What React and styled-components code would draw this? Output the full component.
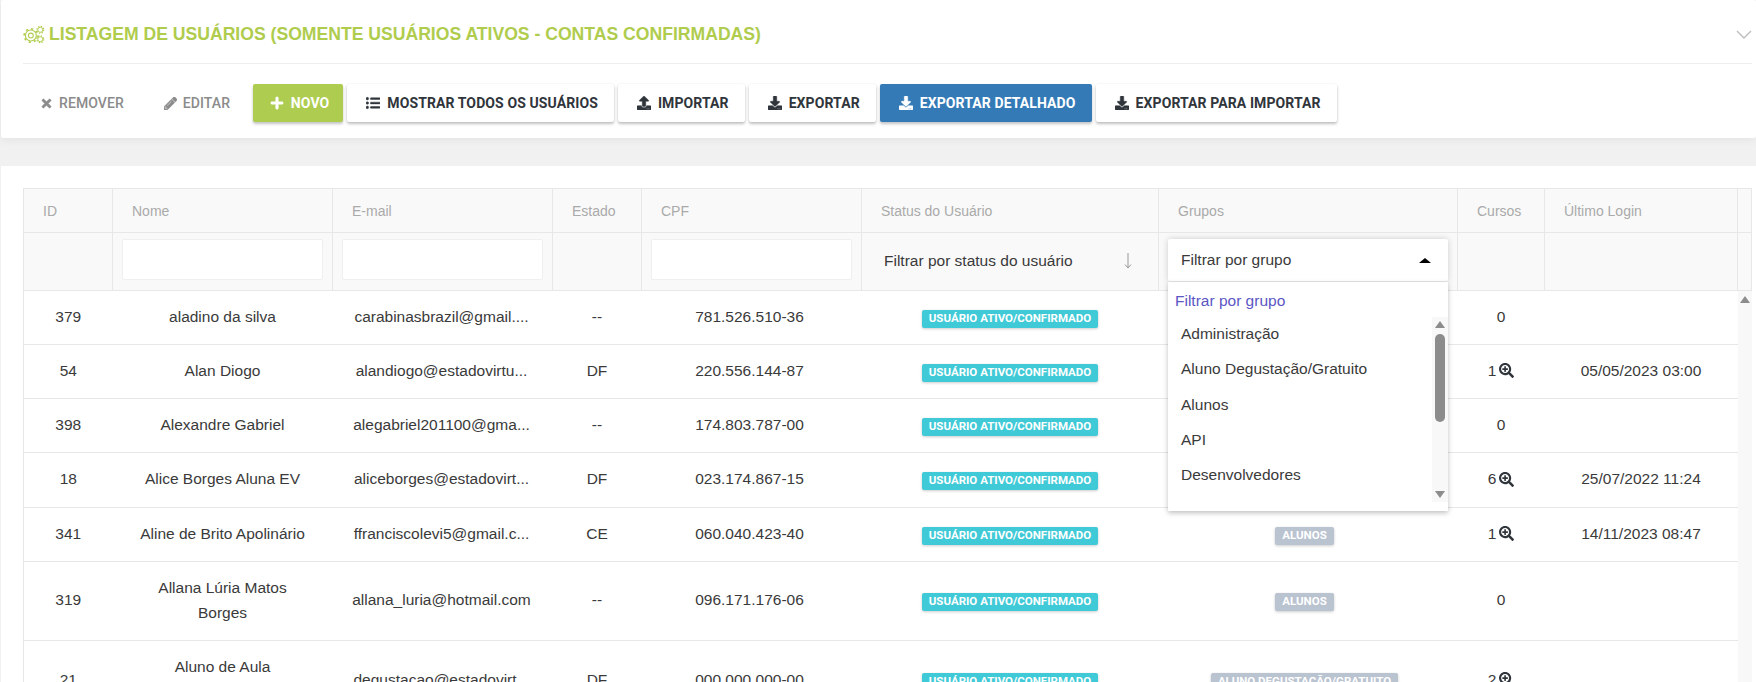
import React from "react";
import styled, { createGlobalStyle } from "styled-components";
import { FaTimes, FaPencilAlt, FaPlus, FaListUl, FaUpload, FaDownload, FaSearchPlus } from "react-icons/fa";

const GlobalStyle = createGlobalStyle`
  html, body { margin: 0; padding: 0; }
  body { font-family: "Liberation Sans", Arial, sans-serif; color: #3a3a3a; }
  * { box-sizing: border-box; }
`;

const Page = styled.div` height: 100vh; overflow: hidden; background: #f1f1f1; padding-left: 1px; `;
const Panel = styled.section` height: 138px; background: #fff; padding: 0 4px 0 22px; box-shadow: 0 2px 8px rgba(0, 0, 0, 0.06); border-radius: 2px; `;
const TitleRow = styled.div` height: 64px; display: flex; align-items: center; justify-content: space-between; border-bottom: 1px solid #eceeef; padding: 5px 0 0; `;
const Title = styled.h1` margin: 0; display: flex; align-items: center; gap: 4px; font-size: 17.6px; font-weight: 700; color: #afcc4d; `;
const Chevron = styled.svg` width: 16px; height: 9px; fill: none; stroke: #bdbdbd; stroke-width: 1.4; `;
const Toolbar = styled.div` display: flex; gap: 4px; padding-top: 20px; `;

const variants = {
  white: { bg: "#fff", fg: "#2f353b", shadow: "0 2px 3px rgba(0,0,0,.24), 0 0 2px rgba(0,0,0,.08)", pad: "0 16px 0 19px" },
  green: { bg: "#aecd50", fg: "#fff", shadow: "0 2px 3px rgba(0,0,0,.24)", pad: "0 14px 0 17px" },
  blue: { bg: "#337ab7", fg: "#fff", shadow: "0 2px 3px rgba(0,0,0,.24)", pad: "0 16px 0 19px" },
};
const Button = styled.button`
  height: 38px; display: flex; align-items: center; gap: 7px; padding: ${(p) => variants[p.$kind].pad};
  border: 0; border-radius: 2px; font: 700 14px Roboto, sans-serif; letter-spacing: 0.1px; text-transform: uppercase;
  background: ${(p) => variants[p.$kind].bg}; color: ${(p) => variants[p.$kind].fg}; box-shadow: ${(p) => variants[p.$kind].shadow};
  svg { width: 14px; height: 14px; flex: none; stroke: currentColor; stroke-width: 16px; }
`;
const FlatButton = styled.button`
  height: 38px; display: flex; align-items: center; gap: 6px; padding: 0 18.75px 0 17px;
  border: 0; background: transparent; color: #8b8b8b; font: 500 14px Roboto, sans-serif; letter-spacing: 0.1px; text-transform: uppercase;
  svg { width: 13px; height: 13px; flex: none; stroke: currentColor; stroke-width: 24px; }
`;

const ListCard = styled.section` margin-top: 28px; height: 600px; background: #fff; padding: 22px 4px 0 22px; `;
const GridHead = styled.table` width: 1729px; table-layout: fixed; border-collapse: collapse; background: #f9f9f9; border: 1px solid #e7e7e7; border-bottom: 0; `;
const HeadCell = styled.th` height: 44px; padding: 0 19px; text-align: left; font-size: 14px; font-weight: 400; color: #aaa; border: 1px solid #e7e7e7; `;
const FilterCell = styled.td` height: 58px; padding: 0 9px 4px; border: 1px solid #e7e7e7; position: relative; `;
const TextFilter = styled.input` display: block; width: 100%; height: 41px; background: #fff; border: 1px solid #efefef; border-radius: 2px; outline: 0; `;
const SelectText = styled.div` display: flex; align-items: center; justify-content: space-between; margin-top: 2px; padding: 0 16px 0 13px; font-size: 15.5px; color: #3a3a3a; `;
const ArrowDown = styled.svg` width: 10px; height: 18px; fill: none; stroke: #9a9a9a; stroke-width: 1; `;

const GroupSelect = styled.div` position: relative; margin-top: 2px; height: 43px; background: #fff; box-shadow: 0 0 6px rgba(0, 0, 0, 0.18); border-radius: 2px; border-bottom: 1px solid #e5e5e5; display: flex; align-items: center; justify-content: space-between; padding: 0 17px 0 13px; font-size: 15.5px; z-index: 2; `;
const Caret = styled.span` width: 0; height: 0; border: 5px solid transparent; border-top: 0; border-bottom: 5px solid #000; border-left-width: 6px; border-right-width: 6px; `;
const Menu = styled.div` position: absolute; top: 43px; left: 0; right: 0; height: 229px; background: #fff; box-shadow: 0 2px 5px rgba(0, 0, 0, 0.25); font-size: 15.5px; `;
const MenuHeader = styled.div` padding: 10px 7px 0; line-height: 17px; color: #5b56c4; `;
const MenuList = styled.ul` list-style: none; margin: 8px 0 0; padding: 0 13px; `;
const MenuItem = styled.li` height: 35.3px; line-height: 34px; color: #3a3a3a; `;
const MenuTrack = styled.div` position: absolute; top: 35px; bottom: 9px; right: 0; width: 16px; background: #f8f8f8; display: flex; flex-direction: column; align-items: center; justify-content: space-between; padding: 4px 0; `;
const MenuThumb = styled.div` position: absolute; top: 17px; left: 3px; width: 10px; height: 88px; border-radius: 5px; background: #8c8c8c; `;
const TrackArrow = styled.span`
  width: 0; height: 0; border-left: 5px solid transparent; border-right: 5px solid transparent;
  ${(p) => (p.$down ? "border-top: 7px solid #8c8c8c;" : "border-bottom: 7px solid #8c8c8c;")}
`;

const BodyRow = styled.div` display: flex; width: 1729px; `;
const GridBody = styled.table` width: 1713px; flex: none; table-layout: fixed; border-collapse: collapse; border-left: 1px solid #e7e7e7; `;
const Row = styled.tr` border-bottom: 1px solid #e7e7e7; `;
const Cell = styled.td` padding: 13px 20px 15px; text-align: center; font-size: 15.5px; line-height: 25.15px; color: #3a3a3a; `;
const NameCell = styled(Cell)` padding-left: 26px; padding-right: 26px; `;
const EmailCell = styled(Cell)` padding-left: 8px; padding-right: 10px; `;
const CpfCell = styled(Cell)` padding-left: 18px; padding-right: 22px; `;
const GroupCell = styled(Cell)` padding-right: 27px; padding-left: 20px; `;
const Badge = styled.span` display: inline-block; margin-top: 2px; height: 18px; padding: 0 7px; border-radius: 2px; font: 700 11.5px/17px Roboto, sans-serif; color: #fff; white-space: nowrap; background: ${(p) => p.$color}; box-shadow: 0 1px 3px rgba(0, 0, 0, 0.2); vertical-align: middle; `;
const CourseCount = styled.span` display: inline-flex; align-items: center; gap: 3px; svg { width: 15px; height: 15px; color: #2f353b; } `;
const ScrollTrack = styled.div` flex: 1; background: #f8f8f8; padding-top: 5px; display: flex; justify-content: center; `;

const columns = [89, 220, 220, 89, 220, 297, 299, 87, 193];

const users = [
  { id: 379, name: "aladino da silva", email: "carabinasbrazil@gmail....", uf: "--", cpf: "781.526.510-36", courses: 0, login: "" },
  { id: 54, name: "Alan Diogo", email: "alandiogo@estadovirtu...", uf: "DF", cpf: "220.556.144-87", courses: 1, login: "05/05/2023 03:00" },
  { id: 398, name: "Alexandre Gabriel", email: "alegabriel201100@gma...", uf: "--", cpf: "174.803.787-00", courses: 0, login: "" },
  { id: 18, name: "Alice Borges Aluna EV", email: "aliceborges@estadovirt...", uf: "DF", cpf: "023.174.867-15", courses: 6, login: "25/07/2022 11:24" },
  { id: 341, name: "Aline de Brito Apolinário", email: "ffranciscolevi5@gmail.c...", uf: "CE", cpf: "060.040.423-40", group: "ALUNOS", courses: 1, login: "14/11/2023 08:47" },
  { id: 319, name: "Allana Lúria Matos Borges", email: "allana_luria@hotmail.com", uf: "--", cpf: "096.171.176-06", group: "ALUNOS", courses: 0, login: "" },
  { id: 21, name: "Aluno de Aula Degustação", email: "degustacao@estadovirt...", uf: "DF", cpf: "000.000.000-00", group: "ALUNO DEGUSTAÇÃO/GRATUITO", courses: 2, login: "" },
];

const groupOptions = ["Administração", "Aluno Degustação/Gratuito", "Alunos", "API", "Desenvolvedores"];

const Cols = () => (
  <colgroup>
    {columns.map((w, i) => <col key={i} width={w} />)}
    <col />
  </colgroup>
);

const GearsIcon = () => (
  <svg width="22" height="19" viewBox="0 0 21 18" fill="none" stroke="#afcc4d">
    <circle cx="7.5" cy="10" r="5.2" strokeWidth="1" />
    <circle cx="7.5" cy="10" r="6.4" strokeWidth="1.6" strokeDasharray="2 3.03" />
    <circle cx="7.5" cy="10" r="2.3" strokeWidth="1" />
    <circle cx="16.5" cy="4.5" r="2.4" strokeWidth="0.9" />
    <circle cx="16.5" cy="4.5" r="3.3" strokeWidth="1.1" strokeDasharray="1.3 1.3" />
    <circle cx="16.5" cy="13.5" r="2.4" strokeWidth="0.9" />
    <circle cx="16.5" cy="13.5" r="3.3" strokeWidth="1.1" strokeDasharray="1.3 1.3" />
  </svg>
);

const App = () => (
  <Page>
    <GlobalStyle />
    <Panel>
      <TitleRow>
        <Title><GearsIcon />LISTAGEM DE USUÁRIOS (SOMENTE USUÁRIOS ATIVOS - CONTAS CONFIRMADAS)</Title>
        <Chevron viewBox="0 0 16 9"><polyline points="1,1 8,8 15,1" /></Chevron>
      </TitleRow>
      <Toolbar>
        <FlatButton><FaTimes />Remover</FlatButton>
        <FlatButton><FaPencilAlt />Editar</FlatButton>
        <Button $kind="green"><FaPlus />Novo</Button>
        <Button $kind="white"><FaListUl />Mostrar todos os usuários</Button>
        <Button $kind="white"><FaUpload />Importar</Button>
        <Button $kind="white"><FaDownload />Exportar</Button>
        <Button $kind="blue"><FaDownload />Exportar detalhado</Button>
        <Button $kind="white"><FaDownload />Exportar para importar</Button>
      </Toolbar>
    </Panel>

    <ListCard>
      <GridHead>
        <Cols />
        <thead>
          <tr>
            {["ID", "Nome", "E-mail", "Estado", "CPF", "Status do Usuário", "Grupos", "Cursos", "Último Login", ""].map((h) => (
              <HeadCell key={h}>{h}</HeadCell>
            ))}
          </tr>
          <tr>
            <FilterCell />
            <FilterCell><TextFilter /></FilterCell>
            <FilterCell><TextFilter /></FilterCell>
            <FilterCell />
            <FilterCell><TextFilter /></FilterCell>
            <FilterCell>
              <SelectText>
                <span>Filtrar por status do usuário</span>
                <ArrowDown viewBox="0 0 10 18"><path d="M5 1v15M2 12.5 5 16l3-3.5" /></ArrowDown>
              </SelectText>
            </FilterCell>
            <FilterCell>
              <GroupSelect>
                <span>Filtrar por grupo</span>
                <Caret />
                <Menu>
                  <MenuHeader>Filtrar por grupo</MenuHeader>
                  <MenuList>
                    {groupOptions.map((g) => <MenuItem key={g}>{g}</MenuItem>)}
                  </MenuList>
                  <MenuTrack>
                    <TrackArrow />
                    <MenuThumb />
                    <TrackArrow $down />
                  </MenuTrack>
                </Menu>
              </GroupSelect>
            </FilterCell>
            <FilterCell />
            <FilterCell />
            <FilterCell />
          </tr>
        </thead>
      </GridHead>
      <BodyRow>
        <GridBody>
          <colgroup>
            {columns.map((w, i) => <col key={i} width={w} />)}
          </colgroup>
          <tbody>
            {users.map((u) => (
              <Row key={u.id}>
                <Cell>{u.id}</Cell>
                <NameCell>{u.name}</NameCell>
                <EmailCell>{u.email}</EmailCell>
                <Cell>{u.uf}</Cell>
                <CpfCell>{u.cpf}</CpfCell>
                <Cell><Badge $color="#40c9d6">USUÁRIO ATIVO/CONFIRMADO</Badge></Cell>
                <GroupCell>{u.group && <Badge $color="#bac3d0">{u.group}</Badge>}</GroupCell>
                <Cell>
                  <CourseCount>{u.courses}{u.courses > 0 && <FaSearchPlus />}</CourseCount>
                </Cell>
                <Cell>{u.login}</Cell>
              </Row>
            ))}
          </tbody>
        </GridBody>
        <ScrollTrack><TrackArrow /></ScrollTrack>
      </BodyRow>
    </ListCard>
  </Page>
);

export default App;
